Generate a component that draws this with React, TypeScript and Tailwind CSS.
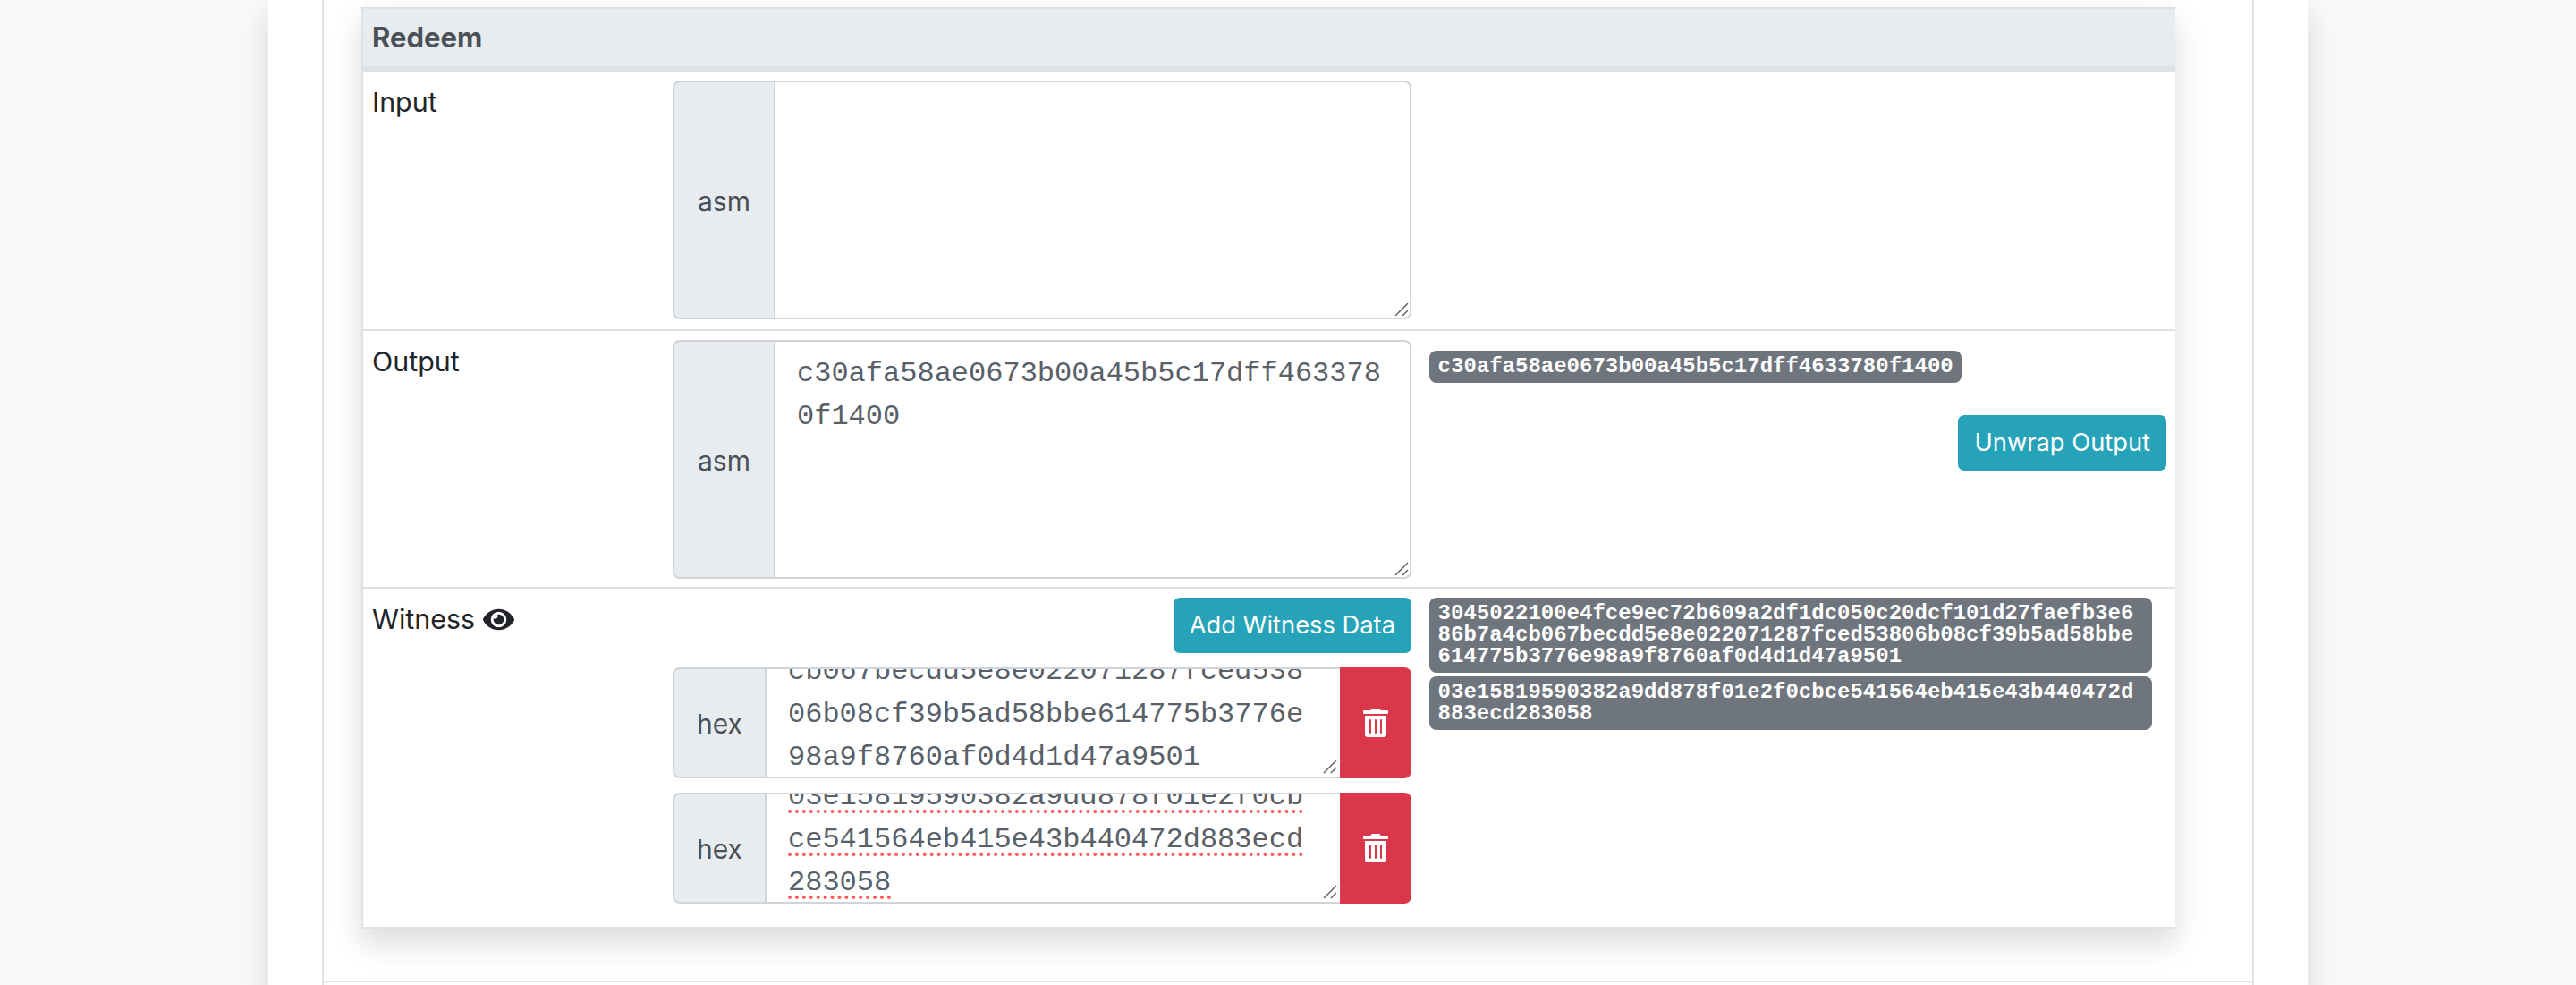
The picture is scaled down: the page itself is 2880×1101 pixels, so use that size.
import { FaEye, FaTrashAlt } from "react-icons/fa";

const sans = "font-['Inter','Liberation_Sans',sans-serif]";
const mono = "font-['Liberation_Mono','Courier_New',monospace]";

const outputHex = "c30afa58ae0673b00a45b5c17dff4633780f1400";
const signature =
  "3045022100e4fce9ec72b609a2df1dc050c20dcf101d27faefb3e686b7a4cb067becdd5e8e022071287fced53806b08cf39b5ad58bbe614775b3776e98a9f8760af0d4d1d47a9501";
const pubkey = "03e15819590382a9dd878f01e2f0cbce541564eb415e43b440472d883ecd283058";

function Badge({ text }: { text: string }) {
  return (
    <div
      className={`${mono} w-fit max-w-[808px] rounded-[8px] bg-[#6f757c] px-[9.6px] py-[6px] text-[24px] leading-[24px] font-bold break-all text-white`}
    >
      {text}
    </div>
  );
}

function ResizeGrip() {
  return (
    <svg
      width="16"
      height="16"
      viewBox="0 0 16 16"
      className="pointer-events-none absolute right-[3px] bottom-[3px]"
    >
      <path d="M1 15 15 1M9 15l6-6" stroke="#5f6368" strokeWidth="1.5" fill="none" />
    </svg>
  );
}

function AsmField({ value }: { value: string }) {
  return (
    <div className="flex h-[267px] w-[826px]">
      <div className="flex w-[115px] shrink-0 items-center justify-center rounded-l-[8px] border-2 border-[#ced4da] bg-[#e9ecef] pt-[3px] text-[30px] text-[#495057]">
        asm
      </div>
      <div className="relative -ml-[2px] flex flex-1">
        <textarea
          readOnly
          spellCheck={false}
          value={value}
          className={`${mono} flex-1 resize-none rounded-r-[8px] border-2 border-[#ced4da] bg-white px-[24px] py-[12px] text-[32px] leading-[48px] text-[#596067] outline-none`}
        />
        <ResizeGrip />
      </div>
    </div>
  );
}

function WitnessField({ value, misspelled }: { value: string; misspelled?: boolean }) {
  return (
    <div className="mb-[16px] flex h-[124px] w-[826px]">
      <div className="flex w-[105px] shrink-0 items-center justify-center rounded-l-[8px] border-2 border-[#ced4da] bg-[#e9ecef] pt-[2px] text-[30px] text-[#495057]">
        hex
      </div>
      {/* scrolled to the last lines, like the textarea in the page */}
      <div
        className={`${mono} relative -ml-[2px] flex min-w-0 flex-1 flex-col justify-end overflow-hidden border-y-2 border-l-2 border-[#ced4da] bg-white px-[24px] text-[32px] leading-[48px] text-[#596067]`}
      >
        <div className="-mb-[3px] shrink-0 break-all">
          <span
            className={
              misspelled
                ? "underline decoration-[#ff5a5a] decoration-dotted decoration-4 underline-offset-[6px]"
                : ""
            }
          >
            {value}
          </span>
        </div>
        <ResizeGrip />
      </div>
      <button className="flex w-[80px] shrink-0 items-center justify-center rounded-r-[8px] bg-[#da374a] text-white">
        <FaTrashAlt size={32} />
      </button>
    </div>
  );
}

function InfoButton({ label }: { label: string }) {
  return (
    <button className="h-[62px] rounded-[7px] bg-[#26a3b9] px-[18px] text-[27.3px] leading-[42px] whitespace-nowrap text-white">
      {label}
    </button>
  );
}

export default function App() {
  return (
    <div className={`${sans} flex h-[1101px] justify-center overflow-hidden bg-[#f8f9fa] text-[#212529]`}>
      <div className="w-[2280px] bg-white px-[60px] shadow-[0_16px_32px_rgba(0,0,0,0.15)]">
        <div className="h-full border-x-2 border-[#dee2e6]">
          <div className="h-[1098px] border-b-2 border-[#dee2e6] pt-[8px] pr-[86px] pl-[42px]">
            <div className="border-y-2 border-l-2 border-[#dee2e6] bg-white shadow-[0_16px_32px_rgba(0,0,0,0.15)]">
              {/* Header */}
              <div className="flex h-[70px] items-center border-b-[6px] border-[#dee2e6] bg-[#e9ecef] px-[10px] text-[31px] font-bold text-[#495057]">
                Redeem
              </div>

              {/* Input */}
              <div className="flex border-b-2 border-[#dee2e6] pt-[10px] pr-[10px] pb-[11px] pl-[10px]">
                <div className="w-[336px] shrink-0 text-[30.4px] leading-[48px]">Input</div>
                <AsmField value="" />
              </div>

              {/* Output */}
              <div className="flex border-b-2 border-[#dee2e6] pt-[10px] pr-[10px] pb-[9px] pl-[10px]">
                <div className="w-[336px] shrink-0 text-[30.4px] leading-[48px]">Output</div>
                <AsmField value={outputHex} />
                <div className="ml-[20px] flex flex-1 flex-col pt-[12px]">
                  <Badge text={outputHex} />
                  <div className="mt-[36px] flex justify-end">
                    <InfoButton label="Unwrap Output" />
                  </div>
                </div>
              </div>

              {/* Witness */}
              <div className="flex pt-[10px] pr-[10px] pb-[10px] pl-[10px]">
                <div className="flex h-[48px] w-[336px] shrink-0 items-center gap-[9px] text-[30.4px] leading-[48px]">
                  Witness
                  <FaEye size={35} />
                </div>
                <div className="w-[826px]">
                  <div className="mb-[16px] flex justify-end">
                    <InfoButton label="Add Witness Data" />
                  </div>
                  <WitnessField value={signature} />
                  <WitnessField value={pubkey} misspelled />
                </div>
                <div className="ml-[20px] flex flex-1 flex-col gap-[4px]">
                  <Badge text={signature} />
                  <Badge text={pubkey} />
                </div>
              </div>
            </div>
          </div>
        </div>
      </div>
    </div>
  );
}
